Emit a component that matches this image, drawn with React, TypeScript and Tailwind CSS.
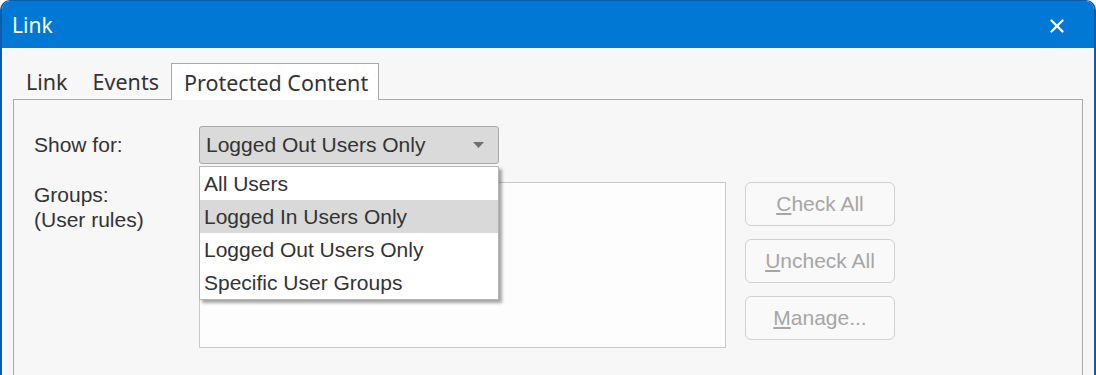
import { X } from "lucide-react";

const options = [
  "All Users",
  "Logged In Users Only",
  "Logged Out Users Only",
  "Specific User Groups",
];

function DisabledButton({ first, rest }: { first: string; rest: string }) {
  return (
    <button className="h-[44px] w-[150px] rounded-md border border-[#d0d0d0] bg-[#f9f9f9] text-[21px] text-[#a6a6a6]">
      <span className="underline underline-offset-2">{first}</span>
      {rest}
    </button>
  );
}

export default function App() {
  return (
    <div className="h-[375px] w-[1096px] overflow-hidden bg-white">
      <div className="flex h-[420px] flex-col overflow-hidden rounded-t-[10px] border-x-2 border-t border-[#0b5cab] bg-[#f7f7f7]">
        {/* Title bar */}
        <div className="flex h-[47px] shrink-0 items-center justify-between bg-[#0078d4] pl-[10px] pr-[26px] pt-[2px] font-['Noto_Sans',sans-serif] text-[21px] text-white">
          <span>Link</span>
          <X className="h-[22px] w-[22px]" strokeWidth={2.6} />
        </div>

        {/* Body */}
        <div className="flex flex-1 flex-col px-[11px] pt-[15px] font-['Noto_Sans',sans-serif]">
          {/* Tabs */}
          <div className="relative z-10 -mb-px flex h-[37px] items-end text-[21.5px] text-[#333]">
            <div className="pl-[13px] pr-[12px] pb-[2px]">Link</div>
            <div className="pl-[13px] pr-[12px] pb-[2px]">Events</div>
            <div className="flex h-[37px] items-center border border-b-0 border-[#a8a8a8] bg-white pl-[12px] pr-[10px] pt-[3px]">
              Protected Content
            </div>
          </div>

          {/* Panel */}
          <div className="relative flex-1 border border-[#ababab] bg-[#f7f7f7] pl-[20px] pt-[26px] font-['Liberation_Sans',Arial,sans-serif] text-[21px] text-[#333]">
            <div className="flex items-center">
              <div className="w-[165px]">Show for:</div>
              <div className="relative">
                <div className="flex h-[38px] w-[300px] items-center justify-between rounded-[3px] border border-[#a9a9a9] bg-[#dadada] pl-[6px] pr-[14px]">
                  <span>Logged Out Users Only</span>
                  <svg width="11" height="6" viewBox="0 0 11 6">
                    <path d="M0 0h11L5.5 6z" fill="#6f6f6f" />
                  </svg>
                </div>
                {/* Open dropdown */}
                <div className="absolute left-0 top-[40px] z-20 w-[300px] border border-[#b5b5b5] bg-white shadow-[3px_3px_3px_rgba(0,0,0,0.35)]">
                  {options.map((o, i) => (
                    <div
                      key={o}
                      className={
                        i === 1
                          ? "flex h-[33px] items-center bg-[#d9d9d9] pl-[4px]"
                          : "flex h-[33px] items-center pl-[4px]"
                      }
                    >
                      {o}
                    </div>
                  ))}
                </div>
              </div>
            </div>

            <div className="mt-[18px] flex">
              <div className="w-[165px] leading-[25px]">
                <div>Groups:</div>
                <div>(User rules)</div>
              </div>
              <div className="h-[166px] w-[527px] border border-[#c9c9c9] bg-[#fdfdfd]" />
              <div className="ml-[19px] flex flex-col gap-[13px]">
                <DisabledButton first="C" rest="heck All" />
                <DisabledButton first="U" rest="ncheck All" />
                <DisabledButton first="M" rest="anage..." />
              </div>
            </div>
          </div>
        </div>
      </div>
    </div>
  );
}
